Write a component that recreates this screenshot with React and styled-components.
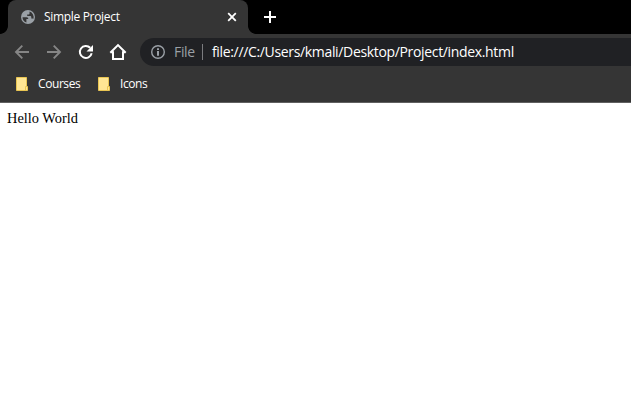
import React from "react";
import styled, { createGlobalStyle } from "styled-components";

const GlobalStyle = createGlobalStyle`
  * { box-sizing: border-box; }
  body { margin: 0; background: #fff; overflow: hidden; }
`;

const Browser = styled.div`
  width: 100%;
  height: 402px;
  display: flex;
  flex-direction: column;
  overflow: hidden;
  background: #fff;
  font-family: "Open Sans", "Noto Sans", sans-serif;
  white-space: nowrap;
`;

const TabStrip = styled.div`
  height: 34px;
  flex: none;
  display: flex;
  background: #000;
`;

const TabFoot = styled.div`
  width: 8px;
  height: 34px;
  background: ${(p) => `radial-gradient(circle at ${p.$side === "left" ? "0" : "8px"} 26px, #000 7.5px, #353535 8.2px)`} 0 0 / 8px 34px no-repeat;
  clip-path: inset(26px 0 0 0);
`;

const Tab = styled.div`
  width: 240px;
  height: 34px;
  display: flex;
  align-items: center;
  padding: 0 8px 0 12px;
  border-radius: 8px 8px 0 0;
  background: #353535;
`;

const TabTitle = styled.span`
  flex: 1;
  margin-left: 8px;
  font-size: 12px;
  line-height: 16px;
  letter-spacing: -0.32px;
  color: #fff;
`;

const IconButton = styled.button`
  width: ${(p) => p.$width || 32}px;
  height: 32px;
  padding: 0;
  border: 0;
  background: none;
  display: flex;
  flex: none;
  align-items: center;
  justify-content: center;
  color: ${(p) => (p.$dim ? "#868686" : "#fff")};
`;

const Glyph = styled.svg`
  display: block;
  flex: none;
  width: ${(p) => p.$size}px;
  height: ${(p) => p.$size}px;
  fill: ${(p) => p.$fill || "currentColor"};
`;

const Toolbar = styled.div`
  height: 32px;
  flex: none;
  display: flex;
  align-items: center;
  padding: 4px 0 0 6px;
  background: #353535;
`;

const AddressBar = styled.div`
  flex: 1;
  height: 28px;
  margin-left: 6px;
  padding-left: 10px;
  display: flex;
  align-items: center;
  border-radius: 14px 0 0 14px;
  background: #202124;
`;

const Scheme = styled.span`
  width: 28px;
  margin-left: 8px;
  font-size: 14px;
  line-height: 20px;
  letter-spacing: -0.35px;
  color: #9aa0a6;
`;

const Divider = styled.span`
  width: 1px;
  height: 16px;
  background: #7b7c7f;
`;

const Url = styled.span`
  margin-left: 9px;
  font-size: 14px;
  line-height: 20px;
  letter-spacing: -0.34px;
  color: #fff;
`;

const Bookmarks = styled.div`
  height: 37px;
  flex: none;
  display: flex;
  padding: 8px 0 0 16px;
  background: #353535;
  border-bottom: 1px solid #606060;
`;

const Bookmark = styled.div`
  width: 82px;
  height: 20px;
  display: flex;
  align-items: center;
`;

const BookmarkLabel = styled.span`
  margin-left: 10px;
  font-size: 12px;
  line-height: 20px;
  letter-spacing: -0.42px;
  color: #fff;
`;

const FolderSvg = styled.svg`
  display: block;
  width: 12px;
  height: 14px;
`;

const Page = styled.main`
  flex: 1;
  padding: 7px;
  font-family: "Liberation Serif", serif;
  font-size: 14.4px;
  line-height: 17px;
  color: #000;
`;

const Stroke = ({ size, d, width }) => (
  <Glyph viewBox={`0 0 ${size} ${size}`} $size={size} $fill="none" aria-hidden="true">
    <path d={d} stroke="currentColor" strokeWidth={width} />
  </Glyph>
);

const Globe = () => (
  <Glyph viewBox="0 0 16 16" $size={16} aria-hidden="true">
    <circle cx="8" cy="8" r="7" fill="#9aa0a6" />
    <path
      d="M2.5 8.2h4.2c1.1 0 1.6.7 1.6 1.8H6.4v3.4A5.6 5.6 0 0 1 2.5 8.2zM9.5 2.6v1.9c0 .6-.4 1-1 1H7.2v1.4h2.9c.7 0 1.2.5 1.2 1.2v1.5h1.3l.7.3A5.7 5.7 0 0 0 9.5 2.6z"
      fill="#353535"
    />
  </Glyph>
);

const Info = () => (
  <Glyph viewBox="0 0 16 16" $size={16} aria-hidden="true">
    <circle cx="8" cy="8" r="6.3" fill="none" stroke="#9aa0a6" strokeWidth="1.4" />
    <path d="M7 4.3h2v1.8H7zM7 7h2v4.8H7z" fill="#9aa0a6" />
  </Glyph>
);

const Folder = () => (
  <FolderSvg viewBox="0 0 12 14" aria-hidden="true">
    <path d="M.5.5h10v9h1v4H.5z" fill="#ffe694" stroke="#e9c552" />
    <path d="M9.5 13V9.5h1" fill="none" stroke="#e9c552" />
  </FolderSvg>
);

export default function App() {
  return (
    <Browser>
      <GlobalStyle />
      <TabStrip>
        <TabFoot $side="left" />
        <Tab>
          <Globe />
          <TabTitle>Simple Project</TabTitle>
          <IconButton $width={16} aria-label="Close tab">
            <Stroke size={16} d="M4.2 4.2l7.6 7.6M11.8 4.2l-7.6 7.6" width={1.8} />
          </IconButton>
        </Tab>
        <TabFoot $side="right" />
        <IconButton $width={28} aria-label="New tab">
          <Stroke size={16} d="M8 3v12M2 9h12" width={2} />
        </IconButton>
      </TabStrip>
      <Toolbar>
        <IconButton $dim aria-label="Back">
          <Stroke size={16} d="M15 8H2.5M8.3 1.7L2 8l6.3 6.3" width={1.9} />
        </IconButton>
        <IconButton $dim aria-label="Forward">
          <Stroke size={16} d="M1 8h12.5M7.7 1.7L14 8l-6.3 6.3" width={1.9} />
        </IconButton>
        <IconButton aria-label="Reload">
          <Glyph viewBox="0 0 16 16" $size={16} aria-hidden="true">
            <path d="M13.7 9.3A6 6 0 1 1 12.2 3.8" fill="none" stroke="currentColor" strokeWidth="2" />
            <path d="M15 1v6.5H8.5z" />
          </Glyph>
        </IconButton>
        <IconButton aria-label="Home">
          <Stroke size={18} d="M1.3 9.8L9 2.1l7.7 7.7M1.5 9.2H4V16h10V9.2h2.5" width={2} />
        </IconButton>
        <AddressBar>
          <Info />
          <Scheme>File</Scheme>
          <Divider />
          <Url>file:///C:/Users/kmali/Desktop/Project/index.html</Url>
        </AddressBar>
      </Toolbar>
      <Bookmarks>
        <Bookmark><Folder /><BookmarkLabel>Courses</BookmarkLabel></Bookmark>
        <Bookmark><Folder /><BookmarkLabel>Icons</BookmarkLabel></Bookmark>
      </Bookmarks>
      <Page>Hello World</Page>
    </Browser>
  );
}
